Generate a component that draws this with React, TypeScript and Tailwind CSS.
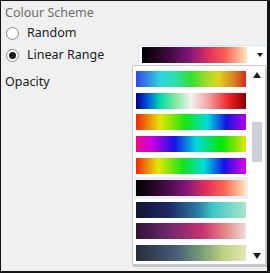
const ramps = [
  "linear-gradient(to right, #3246e6, #2ed6e0 22%, #2ee0b0 35%, #2ee02e 50%, #a6dc2a 65%, #dcd41e 75%, #dc8a1e 88%, #d6281a)",
  "linear-gradient(to right, #00008c, #0050e0 10%, #00dcaa 22%, #7ae89a 35%, #f2f2f2 50%, #f0a0a0 66%, #ee1e1e 85%, #8c0000)",
  "linear-gradient(to right, #f0280a, #e6e600 22%, #14e614 45%, #00dcdc 65%, #1414e6 82%, #b400e6)",
  "linear-gradient(to right, #f0008c, #c800e6 15%, #1414e6 35%, #00dcdc 55%, #00e600 78%, #e6e600)",
  "linear-gradient(to right, #f0280a, #e6e600 20%, #14e614 42%, #00dcdc 62%, #1414e6 80%, #e600e6)",
  "linear-gradient(to right, #000000, #3c0a3c 25%, #82147a 45%, #e6325a 65%, #fa6450 80%, #ffe6be)",
  "linear-gradient(to right, #141432, #1e2864 30%, #2878a0 55%, #3cc8c8 70%, #aae6c8)",
  "linear-gradient(to right, #321432, #6e286e 30%, #c83270 60%, #e68282 80%, #f0dcd7)",
  "linear-gradient(to right, #282d3c, #465a78 35%, #78a078 60%, #bed282 80%, #e6e6b4)",
]

function Radio({ checked, label }: { checked?: boolean; label: string }) {
  return (
    <div className="flex items-center h-[22px]">
      <div className="w-[13px] h-[13px] rounded-full bg-white border border-[#8a8a8a] flex items-center justify-center ml-[1px]">
        {checked && <div className="w-[7px] h-[7px] rounded-full bg-[#1a1a1a]" />}
      </div>
      <span className="ml-[8px] text-[#1a1a1a]">{label}</span>
    </div>
  )
}

export default function App() {
  return (
    <div
      className="relative w-[270px] h-[273px] bg-[#f0f0f0] border-l border-t border-r-[3px] border-b-2 border-[#141414] overflow-hidden text-[12.5px] leading-[16px]"
      style={{ fontFamily: '"Noto Sans", sans-serif' }}
    >
      <div className="pl-[4px] pt-[4px]">
        <div className="text-[#6d6d6d] h-[17px]">Colour Scheme</div>
        <Radio label="Random" />
        <div className="flex items-center">
          <div className="w-[134px]">
            <Radio checked label="Linear Range" />
          </div>
          <div className="w-[130px] h-[21px] bg-white border border-[#d6e6f2] flex items-center pl-[3px]">
            <div className="w-[105px] h-[16px]" style={{ background: ramps[5] }} />
            <svg className="ml-[10px]" width="6" height="4" viewBox="0 0 6 4">
              <path d="M0 0H6L3 4Z" fill="#1a1a1a" />
            </svg>
          </div>
        </div>
        <div className="mt-[8px] text-[#1a1a1a]">Opacity</div>
      </div>

      <div className="absolute left-[131px] top-[64px] w-[134px] h-[200px] bg-white border border-[#c9c9d2] shadow-[1px_2px_0_#c4c4cc] flex">
        <div className="flex flex-col pt-[2px] pl-[1px]">
          {ramps.map((r, i) => (
            <div
              key={i}
              className={`w-[114px] h-[22px] flex items-center pl-[2px] ${i === 5 ? "bg-[#eaf1f6]" : ""}`}
            >
              <div className="w-[110px] h-[16px]" style={{ background: r }} />
            </div>
          ))}
        </div>
        <div className="flex-1 flex flex-col items-center pt-[6px] pb-[5px] ml-[4px] mr-[3px]">
          <svg width="8" height="6" viewBox="0 0 8 6">
            <path d="M0 6H8L4 0Z" fill="#1a1a1a" />
          </svg>
          <div className="mt-[44px] w-[10px] h-[40px] bg-[#cdd0da]" />
          <div className="flex-1" />
          <svg width="8" height="6" viewBox="0 0 8 6">
            <path d="M0 0H8L4 6Z" fill="#1a1a1a" />
          </svg>
        </div>
      </div>
    </div>
  )
}
